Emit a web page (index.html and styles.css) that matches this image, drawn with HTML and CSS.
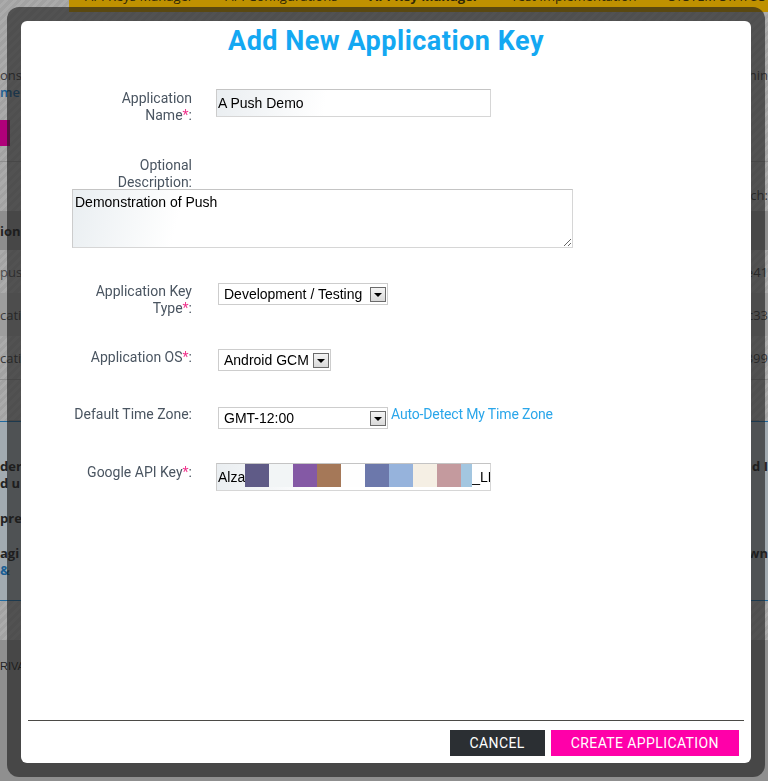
FILE: index.html
```html
<!DOCTYPE html>
<html lang="en">
<head>
<meta charset="utf-8">
<title>Add New Application Key</title>
<link rel="stylesheet" href="styles.css">
</head>
<body>
<div class="page">
  <header class="topnav">
    <ul class="topnav-items">
      <li>API Keys Manager</li>
      <li>API Configurations</li>
      <li class="active">API Key Manager</li>
      <li>Test Implementation</li>
      <li>SYSTEM STATUS</li>
    </ul>
  </header>

  <section class="intro">
    <div class="intro-row"><span>ons for your applications</span><span>everythin</span></div>
    <div class="intro-row"><span class="intro-link">me</span></div>
    <div class="intro-actions"><span class="btn-new"></span></div>
  </section>

  <div class="search-row"><span></span><span>Search:</span></div>

  <div class="keys">
    <div class="keys-row keys-head"><span>ion</span><span></span></div>
    <div class="keys-row"><span class="muted">push demo</span><span>e41</span></div>
    <div class="keys-row keys-alt"><span>cation</span><span>c33</span></div>
    <div class="keys-row"><span>cation</span><span>399</span></div>
  </div>

  <div class="info">
    <div class="info-row"><span class="strong">der</span><span class="strong">d I</span></div>
    <div class="info-row"><span class="strong">d u</span><span></span></div>
    <div class="info-row gap"><span class="strong">pre</span><span></span></div>
    <div class="info-row gap"><span class="strong">agi</span><span class="strong">wn</span></div>
    <div class="info-row"><span class="info-link">&amp;</span><span></span></div>
  </div>

  <footer class="site-footer"><span>RIVA</span></footer>
</div>

<div class="dialog" role="dialog" aria-labelledby="dlg-title">
  <div class="panel">
    <h1 class="title" id="dlg-title">Add New Application Key</h1>

    <form class="form">
      <div class="field">
        <label class="label">Application<br>Name<span class="req">*</span>:</label>
        <div class="input">A Push Demo</div>
      </div>

      <div class="field field-desc">
        <label class="label">Optional<br>Description:</label>
      </div>
      <textarea class="textarea">Demonstration of Push</textarea>

      <div class="field field-type">
        <label class="label">Application Key<br>Type<span class="req">*</span>:</label>
        <div class="select select-wide"><span>Development / Testing</span><span class="select-btn"></span></div>
      </div>

      <div class="field field-os">
        <label class="label">Application OS<span class="req">*</span>:</label>
        <div class="select select-os"><span>Android GCM</span><span class="select-btn"></span></div>
      </div>

      <div class="field field-tz">
        <label class="label">Default Time Zone:</label>
        <div class="select select-wide"><span>GMT-12:00</span><span class="select-btn"></span></div>
        <a class="detect">Auto-Detect My Time Zone</a>
      </div>

      <div class="field field-key">
        <label class="label">Google API Key<span class="req">*</span>:</label>
        <div class="input input-key">
          <span>Alza</span>
          <span class="redact" style="background:#5f5b87"></span>
          <span class="redact" style="background:#f2f5f6"></span>
          <span class="redact" style="background:#8459a5"></span>
          <span class="redact" style="background:#a57858"></span>
          <span class="redact" style="background:#fefefe"></span>
          <span class="redact" style="background:#6c78ab"></span>
          <span class="redact" style="background:#96b3dc"></span>
          <span class="redact" style="background:#f5efe4"></span>
          <span class="redact" style="background:#c49a9e"></span>
          <span class="redact redact-half" style="background:#a3c6e0"></span>
          <span>_LF</span>
        </div>
      </div>
    </form>

    <div class="footer">
      <div class="buttons">
        <button class="btn btn-cancel" type="button">CANCEL</button>
        <button class="btn btn-create" type="button">CREATE APPLICATION</button>
      </div>
    </div>
  </div>
</div>
</body>
</html>
```

FILE: styles.css
```css
* { box-sizing: border-box; }

html, body {
  margin: 0;
  padding: 0;
}

body {
  width: 768px;
  height: 781px;
  overflow: hidden;
  background-color: #a8a8a8;
  background-image: repeating-linear-gradient(-45deg, rgba(0,0,0,0.035) 0 3px, rgba(255,255,255,0.03) 3px 6px);
  font-family: "Open Sans", "Liberation Sans", sans-serif;
  font-size: 13px;
  color: #3a3a3a;
}

/* ---------- background page (dimmed) ---------- */
.page {
  height: 781px;
  display: flex;
  flex-direction: column;
}

.topnav {
  height: 12px;
  margin-left: 69px;
  background: #bf9100;
  flex: none;
}

.topnav-items {
  list-style: none;
  margin: -12px 0 0 16px;
  padding: 0;
  display: flex;
  gap: 32px;
  line-height: 16px;
  color: #2f2706;
  white-space: nowrap;
}

.topnav-items .active { font-weight: 700; }

.intro {
  margin-top: 55px;
  flex: none;
}

.intro-row {
  display: flex;
  justify-content: space-between;
  line-height: 17px;
  white-space: nowrap;
}

.intro-link {
  color: #1b5f94;
  font-weight: 600;
}

.intro-actions {
  margin-top: 19px;
  height: 26px;
}

.btn-new {
  display: block;
  width: 10px;
  height: 26px;
  background: #b0007a;
}

.search-row {
  margin-top: 15px;
  border-top: 1px solid #8e8e8e;
  padding-top: 25px;
  line-height: 17px;
  display: flex;
  justify-content: space-between;
}

.keys {
  margin-top: 7px;
  border-bottom: 1px solid #8e8e8e;
}

.keys-row {
  height: 43px;
  display: flex;
  justify-content: space-between;
  align-items: center;
  white-space: nowrap;
}

.keys-head {
  height: 39px;
  background: #8e8e8e;
  font-weight: 700;
  color: #222;
}

.keys-alt { background: #9d9d9d; }

.muted { color: #4d4d4d; }

.info {
  margin-top: 41px;
  border-top: 1px solid #1f6aa0;
  border-bottom: 1px solid #1f6aa0;
  background: #a2abb1;
  padding: 36px 0 0;
  height: 180px;
  box-shadow: 0 -10px 0 -9px #8e8e8e;
}

.info-row {
  display: flex;
  justify-content: space-between;
  line-height: 17px;
  white-space: nowrap;
  color: #222;
}

.info-row.gap { margin-top: 18px; }

.strong { font-weight: 700; }

.info-link {
  color: #1b5f94;
  font-weight: 700;
}

.site-footer {
  margin-top: 39px;
  flex: 1;
  background: #8f8f8f;
  padding-top: 20px;
  font-size: 11px;
  font-family: "Liberation Sans", sans-serif;
  color: #222;
}

/* ---------- dialog ---------- */
.dialog {
  position: fixed;
  top: 7px;
  left: 7px;
  width: 758px;
  height: 770px;
  padding: 14px;
  border-radius: 12px;
  background: rgba(28, 28, 28, 0.62);
}

.panel {
  height: 100%;
  background: #fff;
  border-radius: 6px;
  display: flex;
  flex-direction: column;
}

.title {
  margin: 0;
  padding-top: 4px;
  text-align: center;
  font-family: Roboto, "Liberation Sans", sans-serif;
  font-weight: 700;
  font-size: 27px;
  letter-spacing: 0.5px;
  line-height: 32px;
  color: #14a8f2;
}

.form {
  flex: 1;
  padding: 32px 0 0 51px;
  font-family: Roboto, "Liberation Sans", sans-serif;
  font-size: 14px;
}

.field {
  display: flex;
  align-items: flex-start;
}

.label {
  width: 120px;
  flex: none;
  margin-right: 24px;
  padding-top: 1px;
  text-align: right;
  line-height: 17px;
  color: #4a5561;
}

.req { color: #f0338c; }

.input {
  width: 275px;
  height: 28px;
  border: 1px solid;
  border-color: #c4c4c4 #d6d6d6 #d6d6d6 #cccccc;
  background: linear-gradient(100deg, #eaeef1, #ffffff 40%);
  padding-left: 1px;
  display: flex;
  align-items: center;
  font-family: "Liberation Sans", Arial, sans-serif;
  font-size: 14px;
  color: #000;
  white-space: nowrap;
  overflow: hidden;
}

.field-desc { margin-top: 33px; }
.field-desc .label { padding-top: 0; }

.textarea {
  display: block;
  width: 501px;
  height: 59px;
  margin-top: -2px;
  border: 1px solid;
  border-color: #c4c4c4 #d6d6d6 #d6d6d6 #cccccc;
  background: linear-gradient(105deg, #e9eef1, #ffffff 22%);
  padding: 4px 2px;
  font-family: "Liberation Sans", Arial, sans-serif;
  font-size: 14px;
  line-height: 16px;
  color: #000;
  resize: both;
}

.field-type { margin-top: 35px; }
.field-os { margin-top: 31px; }
.field-tz { margin-top: 35px; }
.field-key { margin-top: 34px; }

.field-type .label,
.field-tz .label { padding-top: 0; }

.select {
  margin-left: 2px;
  height: 22px;
  border: 1px solid #cdcdcd;
  display: flex;
  align-items: center;
  padding-left: 5px;
  font-family: "Liberation Sans", Arial, sans-serif;
  font-size: 14px;
  color: #000;
  white-space: nowrap;
  background: #fff;
}

.field-os .select,
.field-tz .select { margin-top: 1px; }

.select-wide { width: 170px; }
.select-os { width: 113px; }

.select-btn {
  margin-left: auto;
  margin-right: 1px;
  width: 16px;
  height: 15px;
  border: 1px solid #6b6b6b;
  background: linear-gradient(#f4f4f4, #d9d9d9);
  position: relative;
  flex: none;
}

.select-btn::after {
  content: "";
  position: absolute;
  left: 3px;
  top: 5px;
  border-left: 4px solid transparent;
  border-right: 4px solid transparent;
  border-top: 4px solid #000;
}

.detect {
  margin-left: 3px;
  line-height: 17px;
  letter-spacing: -0.15px;
  color: #2aa6ea;
  cursor: pointer;
}

.input-key {
  align-items: center;
  padding-left: 1px;
}

.redact {
  align-self: flex-start;
  flex: none;
  width: 24px;
  height: 23px;
}

.redact:first-of-type { margin-left: -2px; }
.redact-half { width: 11px; }

/* ---------- footer ---------- */
.footer {
  padding: 0 7px 7px;
}

.buttons {
  border-top: 1px solid #4b4a46;
  padding: 9px 5px 0 0;
  display: flex;
  justify-content: flex-end;
  gap: 6px;
}

.btn {
  height: 26px;
  border: 0;
  padding: 0 20px;
  font-family: Roboto, "Liberation Sans", sans-serif;
  font-size: 14px;
  letter-spacing: 0.4px;
  color: #fff;
  cursor: pointer;
}

.btn-cancel { background: #2b2f33; }
.btn-create { background: #ff00a9; }
```
